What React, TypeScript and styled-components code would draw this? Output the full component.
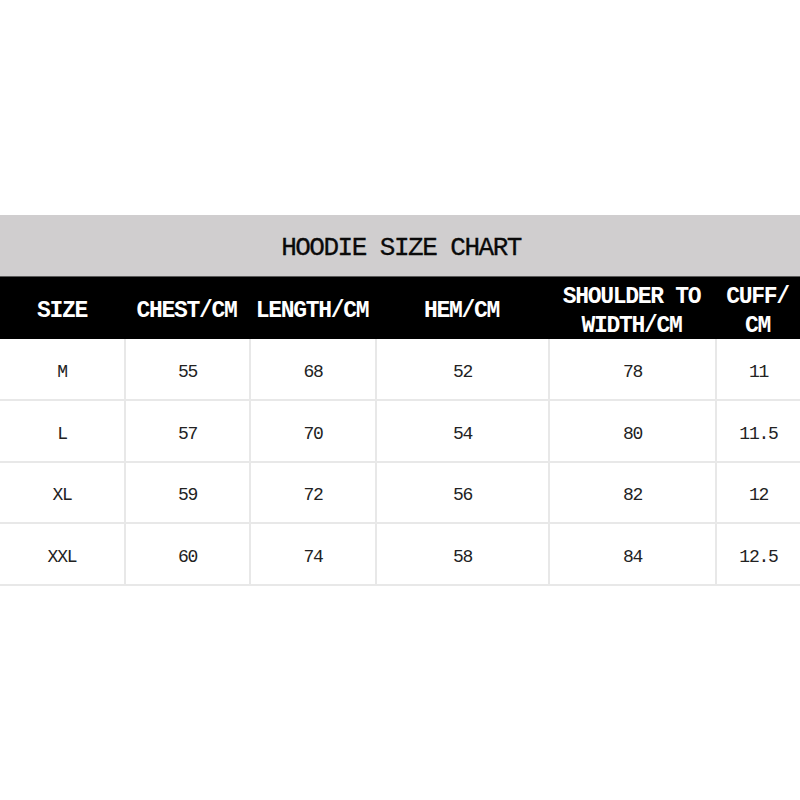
import React from "react";
import styled, { createGlobalStyle } from "styled-components";

const Global = createGlobalStyle`
  html, body { margin: 0; padding: 0; background: #fff; }
  body { font-family: "Liberation Mono", monospace; }
`;

const Page = styled.div`
  width: 800px;
  height: 800px;
  display: flex;
  flex-direction: column;
  justify-content: center;
  background: #fff;
`;

const Title = styled.div`
  height: 61px;
  background: #d0cecf;
  display: flex;
  align-items: center;
  justify-content: center;
  font-family: "Liberation Mono", monospace;
  font-size: 26px;
  letter-spacing: -1.5px;
  color: #0a0a0a;
  padding: 6px 0 0 2px;
  box-sizing: border-box;
  -webkit-text-stroke: 0.3px #0a0a0a;
`;

const COLS = "124px 125px 126px 173px 167px 85px";

const HeadRow = styled.div`
  display: grid;
  grid-template-columns: ${COLS};
  height: 63px;
  background: #000;
  border-top: 1px solid #5a5a5a;
  box-sizing: border-box;
`;

const HeadCell = styled.div`
  display: flex;
  align-items: center;
  justify-content: center;
  text-align: center;
  padding-top: 6px;
  box-sizing: border-box;
  color: #fff;
  font-family: "Liberation Mono", monospace;
  font-weight: bold;
  font-size: 23px;
  letter-spacing: -1.3px;
  line-height: 29px;
  white-space: pre-line;
`;

const Row = styled.div<{ $h: number }>`
  display: grid;
  grid-template-columns: ${COLS};
  height: ${(p) => p.$h}px;
  border-bottom: 2px solid #e8e8e8;
  box-sizing: border-box;
`;

const Cell = styled.div`
  display: flex;
  align-items: center;
  justify-content: center;
  padding-top: 6px;
  box-sizing: border-box;
  font-family: "Liberation Mono", monospace;
  font-size: 18px;
  letter-spacing: -1.2px;
  color: #222;
  & + & { border-left: 2px solid #e8e8e8; }
`;

const headers = ["SIZE", "CHEST/CM", "LENGTH/CM", "HEM/CM", "SHOULDER TO\nWIDTH/CM", "CUFF/\nCM"];
const rows = [
  ["M", "55", "68", "52", "78", "11"],
  ["L", "57", "70", "54", "80", "11.5"],
  ["XL", "59", "72", "56", "82", "12"],
  ["XXL", "60", "74", "58", "84", "12.5"],
];
const heights = [62, 62, 61, 62];

export default function App() {
  return (
    <>
      <Global />
      <Page>
        <Title>HOODIE SIZE CHART</Title>
        <HeadRow>
          {headers.map((h) => (
            <HeadCell key={h}>{h}</HeadCell>
          ))}
        </HeadRow>
        {rows.map((r, i) => (
          <Row key={i} $h={heights[i]}>
            {r.map((c, j) => (
              <Cell key={j}>{c}</Cell>
            ))}
          </Row>
        ))}
      </Page>
    </>
  );
}
